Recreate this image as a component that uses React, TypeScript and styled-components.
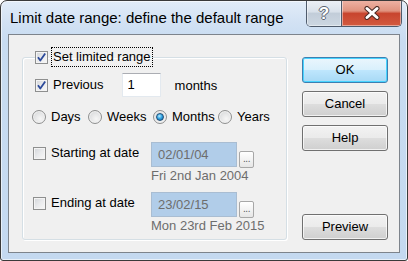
import React from "react";
import styled, { createGlobalStyle } from "styled-components";

const Global = createGlobalStyle`
  html, body { margin: 0; padding: 0; background: #ffffff; }
  body { font-family: "Liberation Sans", Arial, sans-serif; }
  * { box-sizing: border-box; }
`;

const Window = styled.div`
  width: 408px;
  height: 261px;
  display: flex;
  flex-direction: column;
  border: 1px solid #3a3a3a;
  border-radius: 7px 7px 3px 3px;
  background: linear-gradient(180deg, #e2ecf8 0px, #d3e2f4 20px, #c8dcf1 40px, #c4d9f0 100%);
  box-shadow: inset 0 0 0 1px rgba(255, 255, 255, 0.6);
  overflow: hidden;
`;

const TitleBar = styled.div`
  height: 33px;
  flex: none;
  display: flex;
  align-items: flex-start;
`;

const TitleText = styled.div`
  padding: 8px 0 0 9px;
  font-size: 15px;
  line-height: 18px;
  color: #000;
`;

const CaptionButtons = styled.div`
  display: flex;
  margin: -1px 5px 0 auto;
  height: 27px;
  border: 1px solid #4f5b6c;
  border-top: none;
  border-radius: 0 0 5px 5px;
  overflow: hidden;
`;

const CaptionButton = styled.div<{ $close?: boolean }>`
  width: ${(p) => (p.$close ? 60 : 34)}px;
  height: 100%;
  display: flex;
  align-items: center;
  justify-content: center;
  border-left: ${(p) => (p.$close ? "1px solid #4f5b6c" : "none")};
  background: ${(p) =>
    p.$close
      ? "linear-gradient(180deg, #eeb4a6 0%, #e0937f 42%, #c8452e 52%, #d35a40 100%)"
      : "linear-gradient(180deg, #edf1f6 0%, #d9e1ea 45%, #c2cdd9 52%, #cdd7e2 100%)"};
  box-shadow: inset 0 0 0 1px rgba(255, 255, 255, 0.45);
`;

const HelpGlyph = styled.span`
  font-family: "Liberation Sans", Arial, sans-serif;
  font-weight: bold;
  font-size: 17px;
  line-height: 17px;
  color: #ffffff;
  text-shadow: -1px 0 #5a6470, 1px 0 #5a6470, 0 -1px #5a6470, 0 1px #5a6470;
`;

const Client = styled.div`
  flex: 1;
  margin: 0 7px 7px 7px;
  border: 1px solid #7d848c;
  background: #f0f0f0;
  display: flex;
  padding: 12px 12px 12px 13px;
  gap: 15px;
  font-size: 13px;
  color: #000;
`;

const Group = styled.fieldset`
  margin: 0;
  width: 265px;
  border: 1px solid #d5dfe5;
  border-radius: 3px;
  box-shadow: inset 1px 1px 0 #ffffff, 1px 1px 0 #ffffff;
  padding: 6px 8px 0 10px;
  display: flex;
  flex-direction: column;
`;

const Legend = styled.legend`
  padding: 0;
  margin-left: 2px;
  display: flex;
  align-items: center;
  gap: 4px;
`;

const FocusLabel = styled.span`
  outline: 1px dotted #000;
  outline-offset: 0;
  padding: 0 1px;
  line-height: 18px;
  margin: 1px 0;
`;

const Box = styled.span<{ $checked?: boolean }>`
  width: 13px;
  height: 13px;
  flex: none;
  display: inline-flex;
  align-items: center;
  justify-content: center;
  border: 1px solid #8e8f8f;
  background: linear-gradient(135deg, #d2d5d9 0%, #e9eaec 50%, #f8f8f8 100%);
  box-shadow: inset 0 0 0 1px #f4f4f4;
`;

const CheckBox = ({ checked }: { checked?: boolean }) => (
  <Box $checked={checked}>
    {checked && (
      <svg width="11" height="11" viewBox="0 0 11 11">
        <path d="M2 5.2 L4.3 8.5 L9.2 1.5" fill="none" stroke="#2c4a9a" strokeWidth="1.8" strokeLinejoin="round" />
      </svg>
    )}
  </Box>
);

const Row = styled.div<{ $indent?: number }>`
  display: flex;
  align-items: center;
  margin-left: ${(p) => p.$indent ?? 0}px;
`;

const CheckLabel = styled.span`
  margin-left: 5px;
  line-height: 16px;
`;

const NumInput = styled.div`
  width: 39px;
  height: 24px;
  margin-left: 18px;
  border: 1px solid #e3e9ef;
  border-top-color: #abadb3;
  background: #fff;
  padding: 3px 0 0 5px;
  line-height: 16px;
`;

const Unit = styled.span`
  margin-left: 14px;
`;

const RadioRow = styled.div`
  display: flex;
  align-items: center;
  height: 20px;
  margin: 10px 0 0 -1px;
`;

const RadioItem = styled.div<{ $w: number }>`
  display: flex;
  align-items: center;
  width: ${(p) => p.$w}px;
`;

const Circle = styled.span<{ $on?: boolean }>`
  width: 14px;
  height: 14px;
  flex: none;
  border-radius: 50%;
  border: 1px solid #8e8f8f;
  background: radial-gradient(circle at 60% 65%, #f6f6f6 0%, #e2e3e4 55%, #cfd1d3 100%);
  display: inline-flex;
  align-items: center;
  justify-content: center;
  box-shadow: inset 0 0 0 1px #f2f2f2;
`;

const Dot = styled.span`
  width: 8px;
  height: 8px;
  border-radius: 50%;
  border: 1px solid #1f4e77;
  background: radial-gradient(circle at 40% 35%, #b9ecff 0%, #36a8e6 45%, #0b5b9c 100%);
`;

const Radio = ({ on, label, w }: { on?: boolean; label: string; w: number }) => (
  <RadioItem $w={w}>
    <Circle $on={on}>{on && <Dot />}</Circle>
    <CheckLabel>{label}</CheckLabel>
  </RadioItem>
);

const DateRow = styled.div<{ $top: number }>`
  display: flex;
  align-items: flex-start;
  margin-top: ${(p) => p.$top}px;
`;

const DateLead = styled.div`
  width: 118px;
  display: flex;
  align-items: center;
  padding-top: 3px;
`;

const DateCol = styled.div`
  display: flex;
  flex-direction: column;
`;

const DateLine = styled.div`
  display: flex;
  align-items: flex-end;
`;

const DateInput = styled.div`
  width: 86px;
  height: 25px;
  border: 1px solid #a9bdd2;
  background: #b1cde9;
  color: #6d6d6d;
  padding: 4px 0 0 6px;
  line-height: 16px;
`;

const DotsButton = styled.div`
  width: 15px;
  height: 17px;
  margin: 0 0 -1px 2px;
  border: 1px solid #a7a7a7;
  border-radius: 2px;
  background: linear-gradient(180deg, #ffffff 0%, #f3f3f3 50%, #e6e6e6 100%);
  color: #5a5a5a;
  font-size: 10px;
  line-height: 14px;
  text-align: center;
  letter-spacing: -0.5px;
`;

const SubLabel = styled.div`
  color: #6d6d6d;
  line-height: 16px;
  margin-top: 1px;
`;

const Buttons = styled.div`
  display: flex;
  flex-direction: column;
  gap: 8px;
  padding-top: 10px;
`;

const Btn = styled.div<{ $primary?: boolean; $push?: boolean }>`
  width: 86px;
  height: 26px;
  margin-top: ${(p) => (p.$push ? "auto" : "0")};
  border: 1px solid ${(p) => (p.$primary ? "#3c7fb1" : "#707070")};
  border-radius: 3px;
  display: flex;
  align-items: center;
  justify-content: center;
  line-height: 16px;
  background: ${(p) =>
    p.$primary
      ? "linear-gradient(180deg, #eaf6fd 0%, #d9f0fc 48%, #bee6fd 52%, #a7d9f5 100%)"
      : "linear-gradient(180deg, #f2f2f2 0%, #ebebeb 48%, #dddddd 52%, #cfcfcf 100%)"};
  box-shadow: ${(p) =>
    p.$primary ? "inset 0 0 0 1px #48d4ff" : "inset 0 0 0 1px rgba(255,255,255,0.7)"};
`;

export default function App() {
  return (
    <>
      <Global />
      <Window>
        <TitleBar>
          <TitleText>Limit date range: define the default range</TitleText>
          <CaptionButtons>
            <CaptionButton>
              <HelpGlyph>?</HelpGlyph>
            </CaptionButton>
            <CaptionButton $close>
              <svg width="18" height="14" viewBox="0 0 18 14">
                <path d="M4 2.5 L14 11.5 M14 2.5 L4 11.5" stroke="#4a2a24" strokeWidth="5" strokeLinecap="round" />
                <path d="M4 2.5 L14 11.5 M14 2.5 L4 11.5" stroke="#ffffff" strokeWidth="3" strokeLinecap="round" />
              </svg>
            </CaptionButton>
          </CaptionButtons>
        </TitleBar>
        <Client>
          <Group>
            <Legend>
              <CheckBox checked />
              <FocusLabel>Set limited range</FocusLabel>
            </Legend>
            <Row $indent={2}>
              <CheckBox checked />
              <CheckLabel>Previous</CheckLabel>
              <NumInput>1</NumInput>
              <Unit>months</Unit>
            </Row>
            <RadioRow>
              <Radio label="Days" w={56} />
              <Radio label="Weeks" w={65} />
              <Radio on label="Months" w={65} />
              <Radio label="Years" w={60} />
            </RadioRow>
            <DateRow $top={15}>
              <DateLead>
                <CheckBox />
                <CheckLabel>Starting at date</CheckLabel>
              </DateLead>
              <DateCol>
                <DateLine>
                  <DateInput>02/01/04</DateInput>
                  <DotsButton>...</DotsButton>
                </DateLine>
                <SubLabel>Fri 2nd Jan 2004</SubLabel>
              </DateCol>
            </DateRow>
            <DateRow $top={8}>
              <DateLead>
                <CheckBox />
                <CheckLabel>Ending at date</CheckLabel>
              </DateLead>
              <DateCol>
                <DateLine>
                  <DateInput>23/02/15</DateInput>
                  <DotsButton>...</DotsButton>
                </DateLine>
                <SubLabel>Mon 23rd Feb 2015</SubLabel>
              </DateCol>
            </DateRow>
          </Group>
          <Buttons>
            <Btn $primary>OK</Btn>
            <Btn>Cancel</Btn>
            <Btn>Help</Btn>
            <Btn $push>Preview</Btn>
          </Buttons>
        </Client>
      </Window>
    </>
  );
}
